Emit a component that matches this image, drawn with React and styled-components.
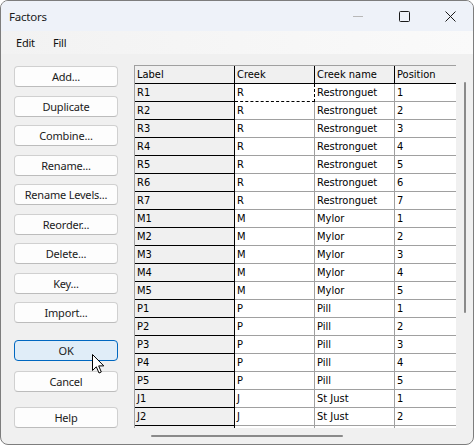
import React from "react";
import styled, { createGlobalStyle } from "styled-components";

const GlobalStyle = createGlobalStyle`
  html, body { margin: 0; padding: 0; background: #ffffff; }
  * { box-sizing: border-box; }
`;

const UI_FONT = `"Noto Sans", "Open Sans", sans-serif`;
const GRID_FONT = `"DejaVu Sans Condensed", "Liberation Sans", sans-serif`;

const Window = styled.div`
  width: 474px;
  height: 445px;
  border: 1px solid #7d7d7d;
  border-radius: 8px;
  overflow: hidden;
  display: flex;
  flex-direction: column;
  background: #f0f0f0;
  font-family: ${UI_FONT};
`;

const TitleBar = styled.div`
  height: 30px;
  flex: none;
  display: flex;
  align-items: center;
  padding-left: 8px;
  background: #eef2f9;
`;

const Title = styled.span`
  font-size: 11.5px;
  letter-spacing: -0.2px;
  color: #1a1a1a;
`;

const Caption = styled.div`
  margin-left: auto;
  display: flex;
  height: 100%;
`;

const CaptionButton = styled.div`
  width: 46px;
  height: 30px;
  display: flex;
  align-items: center;
  justify-content: center;
`;

const MenuBar = styled.div`
  height: 23px;
  flex: none;
  display: flex;
  align-items: center;
  padding-left: 6px;
  background: linear-gradient(to right, #f2f2f2, #fafafa);
`;

const MenuItem = styled.span`
  padding: 0 9px;
  font-size: 11px;
  letter-spacing: -0.2px;
  color: #111;
`;

const Client = styled.div`
  flex: 1;
  display: flex;
  gap: 16px;
  padding: 11px 0 0 13px;
  min-height: 0;
`;

const ButtonColumn = styled.div`
  width: 104px;
  flex: none;
  display: flex;
  flex-direction: column;
  gap: 8.5px;
  padding-top: 1px;
`;

const Button = styled.div`
  position: relative;
  height: 21px;
  flex: none;
  margin-top: ${(p) => p.$space || 0}px;
  display: flex;
  align-items: center;
  justify-content: center;
  border: 1px solid ${(p) => (p.$primary ? "#0067c0" : "#d0d0d0")};
  border-bottom-color: ${(p) => (p.$primary ? "#0067c0" : "#bcbcbc")};
  border-radius: 4px;
  background: ${(p) => (p.$primary ? "#e0edf8" : "#fdfdfd")};
  font-size: 11px;
  letter-spacing: -0.2px;
  color: #1b1b1b;
`;

const Cursor = styled.svg`
  position: absolute;
  left: 77px;
  top: 12.5px;
  z-index: 2;
`;

const Panel = styled.div`
  flex: 1;
  display: flex;
  flex-direction: column;
  min-width: 0;
`;

const PanelTop = styled.div`
  flex: 1;
  display: flex;
  min-height: 0;
`;

const Viewport = styled.div`
  width: 322px;
  flex: none;
  height: 363px;
  overflow: hidden;
  border-left: 1px solid #a0a0a0;
  border-top: 1px solid #a0a0a0;
  font-family: ${GRID_FONT};
  font-size: 11px;
  color: #000;
`;

const Row = styled.div`
  display: grid;
  grid-template-columns: 100px 80px 80px 61px;
  height: 18px;
`;

const Cell = styled.div`
  height: 18px;
  padding-left: 2px;
  display: flex;
  align-items: center;
  white-space: nowrap;
  overflow: hidden;
  background: ${(p) => (p.$kind === "data" ? "#ffffff" : "#f0f0f0")};
  border-bottom: 1px ${(p) => (p.$focus ? "dashed" : "solid")}
    ${(p) => (p.$kind === "data" ? (p.$focus ? "#000" : "#a0a0a0") : "#000")};
  border-right: ${(p) =>
    p.$last
      ? "none"
      : `1px ${p.$focus ? "dashed" : "solid"} ${
          p.$kind === "data" && !p.$focus ? "#a0a0a0" : "#000"
        }`};
`;

const VTrack = styled.div`
  flex: 1;
  padding: 17px 0 0 8px;
`;

const VThumb = styled.div`
  width: 2px;
  height: 231px;
  border-radius: 1px;
  background: #8a8a8a;
`;

const HTrack = styled.div`
  height: 16px;
  flex: none;
  padding: 7px 0 0 17px;
`;

const HThumb = styled.div`
  width: 192px;
  height: 2px;
  border-radius: 1px;
  background: #8a8a8a;
`;

const buttons = [
  { label: "Add..." },
  { label: "Duplicate" },
  { label: "Combine..." },
  { label: "Rename..." },
  { label: "Rename Levels..." },
  { label: "Reorder..." },
  { label: "Delete..." },
  { label: "Key..." },
  { label: "Import..." },
  { label: "OK", primary: true, space: 8.5, cursor: true },
  { label: "Cancel", space: 1 },
  { label: "Help", space: 7 },
];

const rows = [
  ["R1", "R", "Restronguet", "1"],
  ["R2", "R", "Restronguet", "2"],
  ["R3", "R", "Restronguet", "3"],
  ["R4", "R", "Restronguet", "4"],
  ["R5", "R", "Restronguet", "5"],
  ["R6", "R", "Restronguet", "6"],
  ["R7", "R", "Restronguet", "7"],
  ["M1", "M", "Mylor", "1"],
  ["M2", "M", "Mylor", "2"],
  ["M3", "M", "Mylor", "3"],
  ["M4", "M", "Mylor", "4"],
  ["M5", "M", "Mylor", "5"],
  ["P1", "P", "Pill", "1"],
  ["P2", "P", "Pill", "2"],
  ["P3", "P", "Pill", "3"],
  ["P4", "P", "Pill", "4"],
  ["P5", "P", "Pill", "5"],
  ["J1", "J", "St Just", "1"],
  ["J2", "J", "St Just", "2"],
  ["", "", "", ""],
];

const headers = ["Label", "Creek", "Creek name", "Position"];

export default function App() {
  return (
    <>
      <GlobalStyle />
      <Window>
        <TitleBar>
          <Title>Factors</Title>
          <Caption>
            <CaptionButton>
              <svg width="10" height="10" viewBox="0 0 10 10">
                <line x1="0" y1="5.5" x2="10" y2="5.5" stroke="#b8b8b8" strokeWidth="1" />
              </svg>
            </CaptionButton>
            <CaptionButton>
              <svg width="11" height="11" viewBox="0 0 11 11">
                <rect x="0.5" y="0.5" width="10" height="10" rx="1" fill="none" stroke="#1a1a1a" strokeWidth="1" />
              </svg>
            </CaptionButton>
            <CaptionButton>
              <svg width="11" height="11" viewBox="0 0 11 11">
                <path d="M0.5 0.5 L10.5 10.5 M10.5 0.5 L0.5 10.5" stroke="#1a1a1a" strokeWidth="1" />
              </svg>
            </CaptionButton>
          </Caption>
        </TitleBar>
        <MenuBar>
          <MenuItem>Edit</MenuItem>
          <MenuItem>Fill</MenuItem>
        </MenuBar>
        <Client>
          <ButtonColumn>
            {buttons.map((b) => (
              <Button key={b.label} $primary={b.primary} $space={b.space}>
                {b.label}
                {b.cursor && (
                  <Cursor width="13" height="21" viewBox="0 0 13 21">
                    <path
                      d="M0.5 0.5 L0.5 16.5 L4.3 12.8 L7 19 L9.3 18 L6.7 11.9 L11.8 11.9 Z"
                      fill="#ffffff"
                      stroke="#000000"
                      strokeWidth="1"
                      strokeLinejoin="miter"
                    />
                  </Cursor>
                )}
              </Button>
            ))}
          </ButtonColumn>
          <Panel>
            <PanelTop>
              <Viewport>
                <Row>
                  {headers.map((h, i) => (
                    <Cell key={h} $kind="head" $last={i === 3}>
                      {h}
                    </Cell>
                  ))}
                </Row>
                {rows.map((r, ri) => (
                  <Row key={ri}>
                    {r.map((v, i) => (
                      <Cell
                        key={i}
                        $kind={i === 0 ? "label" : "data"}
                        $last={i === 3}
                        $focus={ri === 0 && i === 1}
                      >
                        {v}
                      </Cell>
                    ))}
                  </Row>
                ))}
              </Viewport>
              <VTrack>
                <VThumb />
              </VTrack>
            </PanelTop>
            <HTrack>
              <HThumb />
            </HTrack>
          </Panel>
        </Client>
      </Window>
    </>
  );
}
